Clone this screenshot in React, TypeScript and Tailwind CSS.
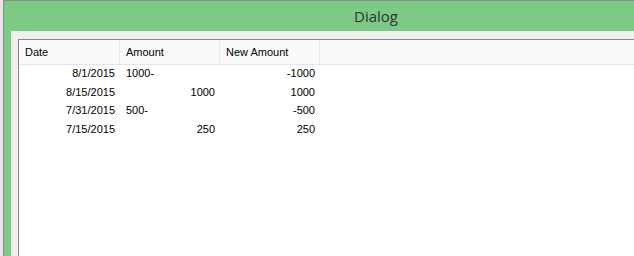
const rows = [
  { date: "8/1/2015", debit: "1000-", credit: "", total: "-1000" },
  { date: "8/15/2015", debit: "", credit: "1000", total: "1000" },
  { date: "7/31/2015", debit: "500-", credit: "", total: "-500" },
  { date: "7/15/2015", debit: "", credit: "250", total: "250" },
]

export default function App() {
  return (
    <div className="h-[256px] w-[634px] overflow-hidden bg-[#e6e6e6] pl-[3px]">
      {/* Window frame */}
      <div className="flex h-full flex-col border-l border-t border-[#8c8c8c] bg-[#7dc986]">
        <div className="flex h-[30px] items-center pl-[350px] font-['Open_Sans',sans-serif] text-[15px] text-[#333]">
          Dialog
        </div>

        {/* Client area */}
        <div className="ml-[7px] flex-1 bg-[#f0f0f0] pl-[7px] pt-[8px]">
          <div className="h-full border-l border-t border-[#828790] bg-white font-['Liberation_Sans',sans-serif] text-[11px] text-black">
            {/* Column headers */}
            <div className="flex h-[25px] items-center border-b border-[#dde7f5] bg-[#fafafa]">
              <div className="flex h-full w-[101px] items-center border-r border-[#e6ebf2] pl-[6px]">Date</div>
              <div className="flex h-full w-[100px] items-center border-r border-[#e6ebf2] pl-[6px]">Amount</div>
              <div className="flex h-full w-[100px] items-center border-r border-[#e6ebf2] pl-[6px]">New Amount</div>
            </div>

            <div className="-mt-[1px]">
              {rows.map((r) => (
                <div key={r.date} className="flex h-[18.7px] items-center">
                  <div className="w-[101px] pr-[5px] text-right">{r.date}</div>
                  <div className="relative w-[100px] pr-[5px] text-right">
                    <span className="absolute left-[6px]">{r.debit}</span>
                    {r.credit || "\u00a0"}
                  </div>
                  <div className="w-[100px] pr-[5px] text-right">{r.total}</div>
                </div>
              ))}
            </div>
          </div>
        </div>
      </div>
    </div>
  )
}
